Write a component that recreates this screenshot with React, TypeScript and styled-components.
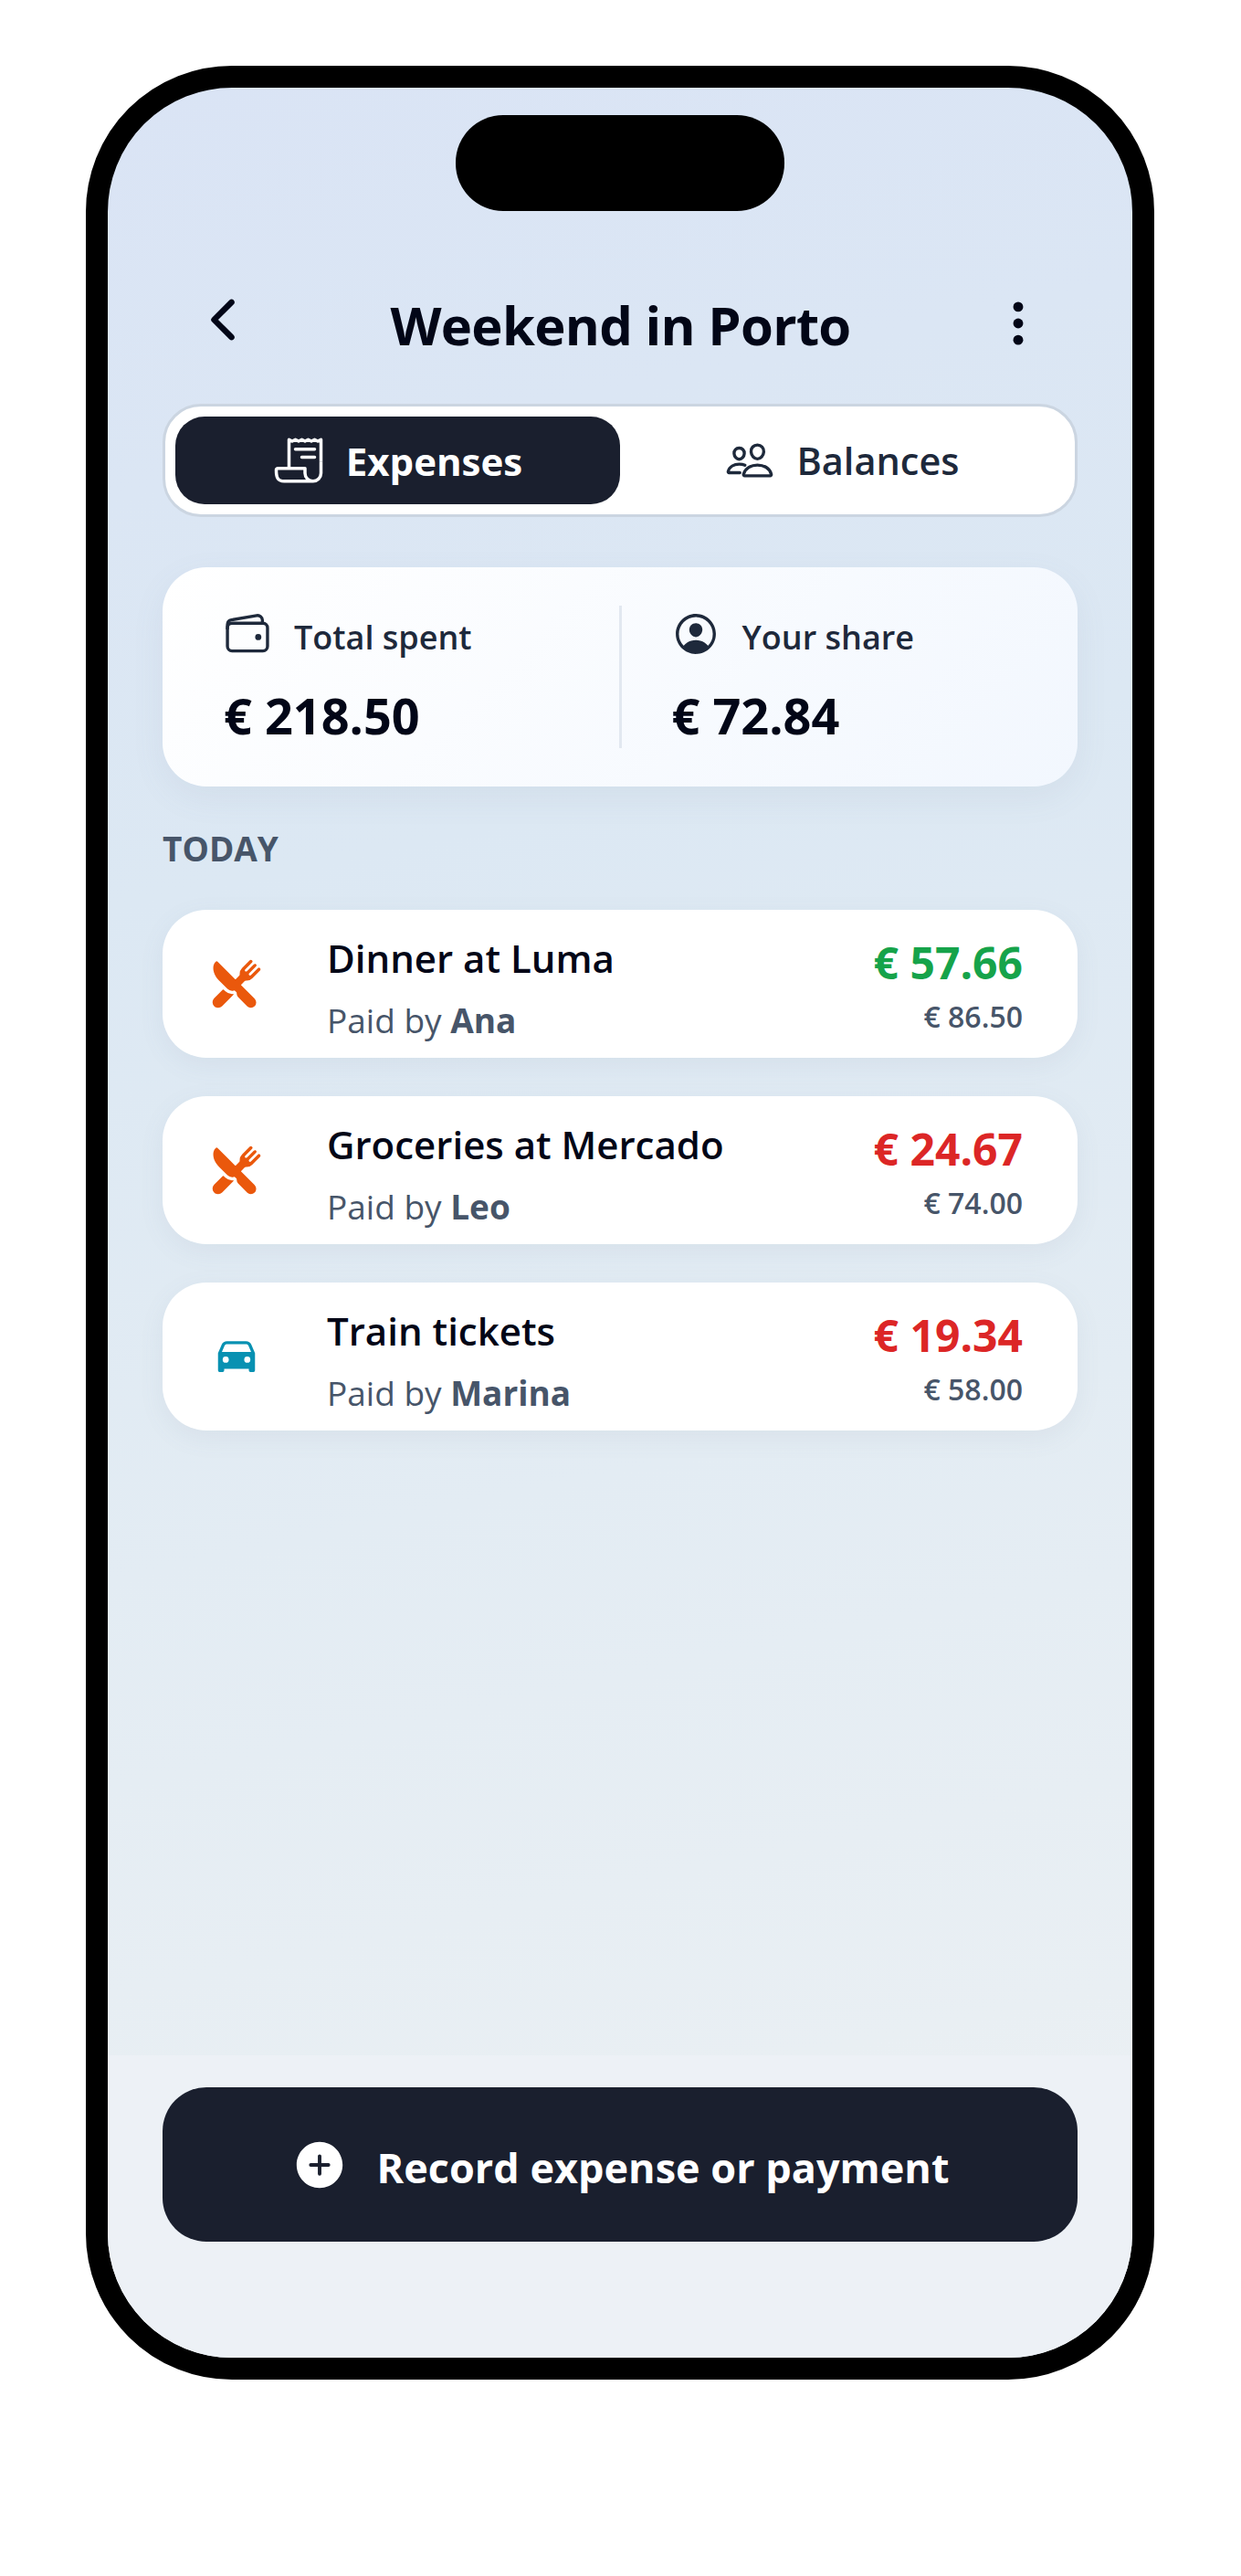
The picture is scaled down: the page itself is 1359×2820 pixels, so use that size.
import React from 'react';
import styled, { createGlobalStyle } from 'styled-components';
import {
  IoAddCircle,
  IoCar,
  IoChevronBack,
  IoEllipsisVertical,
  IoPeopleOutline,
  IoPersonCircleOutline,
  IoReceiptOutline,
  IoRestaurant,
  IoWalletOutline,
} from 'react-icons/io5';

const colors = {
  ink: '#020617',
  dark: '#1a1f2e',
  navy: '#1e293b',
  slate: '#475569',
  green: '#16a34a',
  red: '#dc2626',
  orange: '#ea580c',
  cyan: '#0891b2',
};

const GlobalStyle = createGlobalStyle`
html, body {
  margin: 0;
  padding: 0;
  background: #fff;
  font-family: "Open Sans", "Noto Sans", "Liberation Sans", sans-serif;
}
* { box-sizing: border-box; }`;

const Page = styled.div`
width: 1358px;
height: 2820px;
padding-top: 72px;
display: flex;
justify-content: center;`;

const Phone = styled.div`
position: relative;
width: 1170px;
height: 2533px;
border: 24px solid #000;
border-radius: 160px;
overflow: hidden;
display: flex;
flex-direction: column;
background: linear-gradient(168deg, #dae4f5 0%, #dce8f3 33%, #e3ecf3 60%, #e9eff3 85%, #eef1f5 100%);`;

const Notch = styled.div`
position: absolute;
top: 30px;
left: 50%;
margin-left: -180px;
width: 360px;
height: 105px;
border-radius: 52px;
background: #000;`;

const Content = styled.div`
flex: 1;
padding: 210px 60px 0;
display: flex;
flex-direction: column;`;

const Header = styled.header`
height: 100px;
display: flex;
align-items: center;
padding: 0 31px 0 32px;`;

const HeaderIcon = styled.div<{ $lift: number }>`
width: 68px;
display: flex;
justify-content: center;
padding-bottom: ${(p) => p.$lift}px;
color: ${colors.ink};`;

const Title = styled.h1`
flex: 1;
margin: 0;
text-align: center;
font-size: 58px;
line-height: 78px;
font-weight: 700;
letter-spacing: -0.7px;
color: ${colors.ink};`;

const Tabs = styled.div`
margin-top: 36px;
height: 124px;
padding: 11px;
display: flex;
background: #fff;
border: 3px solid #cbd5e1;
border-radius: 42px;`;

const Tab = styled.div<{ $active?: boolean }>`
flex: 1;
display: flex;
align-items: center;
justify-content: center;
gap: 24px;
border-radius: 32px;
font-size: ${(p) => (p.$active ? '42px' : '41.5px')};
font-weight: ${(p) => (p.$active ? 700 : 600)};
background: ${(p) => (p.$active ? colors.dark : 'transparent')};
color: ${(p) => (p.$active ? '#fff' : colors.navy)};`;

const Summary = styled.section`
margin-top: 55px;
height: 240px;
padding: 42px 0;
display: grid;
grid-template-columns: 1fr 3px 1fr;
background: linear-gradient(135deg, #fff 0%, #f2f7fe 100%);
border-radius: 48px;
box-shadow: 0 12px 36px rgba(100, 116, 139, 0.08);`;

const Divider = styled.div`
background: #e2e8f0;`;

const Stat = styled.div<{ $right?: boolean }>`
padding-top: 4px;
padding-left: ${(p) => (p.$right ? '54px' : '66px')};`;

const StatLabel = styled.div`
display: flex;
align-items: center;
gap: 24px;
height: 54px;
font-size: 36px;
font-weight: 600;
color: ${colors.navy};`;

const StatLabelText = styled.span`
padding-top: 6px;`;

const StatValue = styled.div`
margin-top: 29px;
padding-left: 1px;
font-size: 54px;
font-weight: 700;
line-height: 66px;
color: ${colors.ink};`;

const SectionLabel = styled.h2`
margin: 43px 0 0;
font-size: 37px;
line-height: 50px;
font-weight: 700;
color: ${colors.slate};`;

const List = styled.div`
margin-top: 42px;
display: flex;
flex-direction: column;
gap: 42px;`;

const Row = styled.article`
height: 162px;
padding: 0 60px 0 52px;
display: flex;
align-items: center;
background: #fff;
border-radius: 48px;
box-shadow: 0 8px 28px rgba(100, 116, 139, 0.08);`;

const RowIcon = styled.div`
width: 128px;
flex: none;
display: flex;`;

const RowGlyph = styled.div<{ $color: string }>`
width: 58px;
display: flex;
justify-content: center;
color: ${(p) => p.$color};`;

const RowMain = styled.div`
flex: 1;
padding-top: 7px;`;

const RowTitle = styled.div`
font-size: 42px;
line-height: 60px;
font-weight: 600;
color: ${colors.ink};`;

const RowPayer = styled.div`
margin-top: 13px;
font-size: 37px;
line-height: 50px;
color: ${colors.slate};
strong { font-weight: 700; }`;

const RowAmounts = styled.div`
padding-top: 5px;
text-align: right;`;

const Share = styled.div<{ $positive?: boolean }>`
font-size: 48px;
line-height: 60px;
font-weight: 700;
color: ${(p) => (p.$positive ? colors.green : colors.red)};`;

const Total = styled.div`
margin-top: 6px;
font-size: 32px;
line-height: 46px;
font-weight: 600;
color: ${colors.slate};`;

const Footer = styled.footer`
height: 331px;
padding: 35px 60px 0;
background: #edf1f6;`;

const RecordButton = styled.button`
width: 100%;
height: 169px;
padding: 0;
border: 0;
display: flex;
align-items: center;
justify-content: center;
gap: 32px;
border-radius: 48px;
background: ${colors.dark};
color: #fff;
font-family: inherit;
font-size: 45px;
font-weight: 700;`;

const RecordLabel = styled.span`
padding-top: 5px;`;

type Expense = {
  title: string,
  payer: string,
  share: string,
  total: string,
  positive?: boolean,
  icon: JSX.Element,
  color: string
}

const expenses: Expense[] = [
  { title: 'Dinner at Luma', payer: 'Ana', share: '€ 57.66', total: '€ 86.50', positive: true, icon: <IoRestaurant size={56} />, color: colors.orange },
  { title: 'Groceries at Mercado', payer: 'Leo', share: '€ 24.67', total: '€ 74.00', icon: <IoRestaurant size={56} />, color: colors.orange },
  { title: 'Train tickets', payer: 'Marina', share: '€ 19.34', total: '€ 58.00', icon: <IoCar size={54} />, color: colors.cyan },
];

const App = () => (
  <Page>
    <GlobalStyle />
    <Phone>
      <Notch />
      <Content>
        <Header>
          <HeaderIcon $lift={12}><IoChevronBack size={68} /></HeaderIcon>
          <Title>Weekend in Porto</Title>
          <HeaderIcon $lift={4}><IoEllipsisVertical size={58} /></HeaderIcon>
        </Header>
        <Tabs>
          <Tab $active>
            <IoReceiptOutline size={56} />
            Expenses
          </Tab>
          <Tab>
            <IoPeopleOutline size={54} />
            Balances
          </Tab>
        </Tabs>
        <Summary>
          <Stat>
            <StatLabel>
              <IoWalletOutline size={54} />
              <StatLabelText>Total spent</StatLabelText>
            </StatLabel>
            <StatValue>€ 218.50</StatValue>
          </Stat>
          <Divider />
          <Stat $right>
            <StatLabel>
              <IoPersonCircleOutline size={54} />
              <StatLabelText>Your share</StatLabelText>
            </StatLabel>
            <StatValue>€ 72.84</StatValue>
          </Stat>
        </Summary>
        <SectionLabel>TODAY</SectionLabel>
        <List>
          {expenses.map((item) => (
            <Row key={item.title}>
              <RowIcon>
                <RowGlyph $color={item.color}>{item.icon}</RowGlyph>
              </RowIcon>
              <RowMain>
                <RowTitle>{item.title}</RowTitle>
                <RowPayer>
                  Paid by <strong>{item.payer}</strong>
                </RowPayer>
              </RowMain>
              <RowAmounts>
                <Share $positive={item.positive}>{item.share}</Share>
                <Total>{item.total}</Total>
              </RowAmounts>
            </Row>
          ))}
        </List>
      </Content>
      <Footer>
        <RecordButton>
          <IoAddCircle size={62} />
          <RecordLabel>Record expense or payment</RecordLabel>
        </RecordButton>
      </Footer>
    </Phone>
  </Page>
);

export default App;
